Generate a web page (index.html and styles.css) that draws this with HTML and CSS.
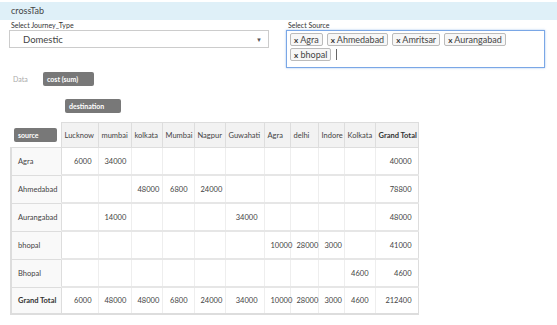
FILE: index.html
```html
<!DOCTYPE html>
<html lang="en">
<head>
    <meta charset="UTF-8">
    <title>crossTab</title>
    <link rel="stylesheet" href="styles.css">
</head>
<body>
    <div class="title-bar">crossTab</div>

    <div class="filters">
        <div class="filter journey">
            <label>Select Journey_Type</label>
            <div class="select">
                <span>Domestic</span>
                <span class="caret">&#9660;</span>
            </div>
        </div>
        <div class="filter source">
            <label>Select Source</label>
            <div class="multi">
                <span class="tag"><b>x</b> Agra</span>
                <span class="tag"><b>x</b> Ahmedabad</span>
                <span class="tag"><b>x</b> Amritsar</span>
                <span class="tag"><b>x</b> Aurangabad</span>
                <span class="tag"><b>x</b> bhopal</span>
                <span class="cursor"></span>
            </div>
        </div>
    </div>

    <div class="pivot">
        <div class="data-row">
            <span class="data-label">Data</span>
            <span class="pill pill-cost">cost (sum)</span>
        </div>
        <div class="col-row">
            <span class="pill pill-dest">destination</span>
        </div>

        <table class="pvt">
            <colgroup>
                <col class="c-row">
                <col class="c37"><col class="c33"><col class="c31"><col class="c32">
                <col class="c31"><col class="c39"><col class="c26"><col class="c28">
                <col class="c26"><col class="c31"><col class="c43">
            </colgroup>
            <thead>
                <tr>
                    <th class="corner"><span class="pill pill-src">source</span></th>
                    <th>Lucknow</th>
                    <th>mumbai</th>
                    <th>kolkata</th>
                    <th>Mumbai</th>
                    <th>Nagpur</th>
                    <th>Guwahati</th>
                    <th>Agra</th>
                    <th>delhi</th>
                    <th>Indore</th>
                    <th>Kolkata</th>
                    <th class="total">Grand Total</th>
                </tr>
            </thead>
            <tbody>
                <tr>
                    <th>Agra</th>
                    <td>6000</td><td>34000</td><td></td><td></td><td></td><td></td><td></td><td></td><td></td><td></td>
                    <td>40000</td>
                </tr>
                <tr>
                    <th>Ahmedabad</th>
                    <td></td><td></td><td>48000</td><td>6800</td><td>24000</td><td></td><td></td><td></td><td></td><td></td>
                    <td>78800</td>
                </tr>
                <tr>
                    <th>Aurangabad</th>
                    <td></td><td>14000</td><td></td><td></td><td></td><td>34000</td><td></td><td></td><td></td><td></td>
                    <td>48000</td>
                </tr>
                <tr>
                    <th>bhopal</th>
                    <td></td><td></td><td></td><td></td><td></td><td></td><td>10000</td><td>28000</td><td>3000</td><td></td>
                    <td>41000</td>
                </tr>
                <tr>
                    <th>Bhopal</th>
                    <td></td><td></td><td></td><td></td><td></td><td></td><td></td><td></td><td></td><td>4600</td>
                    <td>4600</td>
                </tr>
                <tr class="grand">
                    <th class="total">Grand Total</th>
                    <td>6000</td><td>48000</td><td>48000</td><td>6800</td><td>24000</td><td>34000</td><td>10000</td><td>28000</td><td>3000</td><td>4600</td>
                    <td>212400</td>
                </tr>
            </tbody>
        </table>
    </div>
</body>
</html>
```

FILE: styles.css
```css
body {
    margin: 0;
    padding-top: 2px;
    font-family: Lato, "Open Sans", sans-serif;
    color: #333;
    background: #fff;
}

.title-bar {
    height: 18px;
    line-height: 18px;
    padding-left: 11px;
    background: #dff0f8;
    font-size: 9px;
    color: #444;
}

.filters {
    display: flex;
    padding-left: 9px;
    gap: 17px;
}

.filter label {
    display: block;
    font-size: 7px;
    color: #333;
    height: 10px;
    line-height: 10px;
    padding-left: 2px;
}

.journey {
    width: 260px;
}

.select {
    height: 18px;
    border: 1px solid #ccc;
    box-sizing: border-box;
    display: flex;
    justify-content: space-between;
    align-items: center;
    padding: 0 6px 0 13px;
    font-size: 9.5px;
    color: #444;
}

.caret {
    font-size: 6px;
    color: #555;
}

.source {
    width: 259px;
}

.multi {
    height: 38px;
    box-sizing: border-box;
    border: 1px solid #7aa7e6;
    box-shadow: 0 0 2px rgba(80, 140, 220, 0.5);
    padding: 2px 3px;
    display: flex;
    flex-wrap: wrap;
    align-content: flex-start;
    gap: 2px 4px;
}

.tag {
    height: 13px;
    line-height: 12px;
    box-sizing: border-box;
    border: 1px solid #bbb;
    border-radius: 2px;
    background: #f7f7f7;
    padding: 0 3px;
    font-size: 9px;
    color: #444;
}

.tag b {
    font-size: 8px;
    color: #333;
}

.cursor {
    width: 1px;
    height: 11px;
    margin-top: 1px;
    margin-left: 1px;
    background: #666;
}

.pivot {
    padding-left: 10px;
}

.data-row {
    display: flex;
    align-items: center;
    margin-top: 4px;
    height: 14px;
}

.data-label {
    font-size: 7px;
    color: #aaa;
    width: 30px;
    padding-left: 3px;
}

.pill {
    display: inline-block;
    height: 14px;
    line-height: 14px;
    box-sizing: border-box;
    background: #787878;
    color: #fff;
    font-size: 7px;
    font-weight: bold;
    border-radius: 2px;
    padding-left: 4px;
}

.pill-cost {
    width: 51px;
}

.col-row {
    height: 14px;
    margin-top: 13px;
    padding-left: 55px;
    display: flex;
}

.pill-dest {
    width: 56px;
}

.pill-src {
    width: 43px;
    text-align: left;
    vertical-align: middle;
}

.pvt {
    margin-top: 9px;
    border-collapse: collapse;
    table-layout: fixed;
    width: 407px;
    font-size: 7.5px;
    color: #444;
}

.c-row { width: 50px; }
.c26 { width: 26px; }
.c28 { width: 28px; }
.c31 { width: 31px; }
.c32 { width: 32px; }
.c33 { width: 33px; }
.c37 { width: 37px; }
.c39 { width: 39px; }
.c43 { width: 43px; }

.pvt thead th {
    height: 24px;
    background: #f2f2f2;
    border: 1px solid #ddd;
    font-weight: normal;
    text-align: left;
    padding: 0 3px;
    white-space: nowrap;
    overflow: hidden;
}

.pvt thead th.corner {
    background: #fff;
    border: none;
    padding: 0 0 0 3px;
    vertical-align: middle;
}

.pvt tbody th {
    height: 26px;
    background: #f9f9f9;
    border: 1px solid #ddd;
    border-left: 2px solid #ddd;
    font-weight: normal;
    text-align: left;
    padding: 0 6px;
    white-space: nowrap;
}

.pvt td {
    height: 26px;
    border-left: 1px solid #eee;
    border-right: 1px solid #eee;
    border-bottom: 2px solid #e6e6e6;
    text-align: right;
    padding: 0 6px;
}

.pvt td:last-child {
    border-right: 1px solid #ddd;
}

.pvt .total {
    font-weight: bold;
    color: #333;
}

.pvt tr.grand th,
.pvt tr.grand td {
    height: 25px;
    border-bottom: 2px solid #ddd;
}
```
